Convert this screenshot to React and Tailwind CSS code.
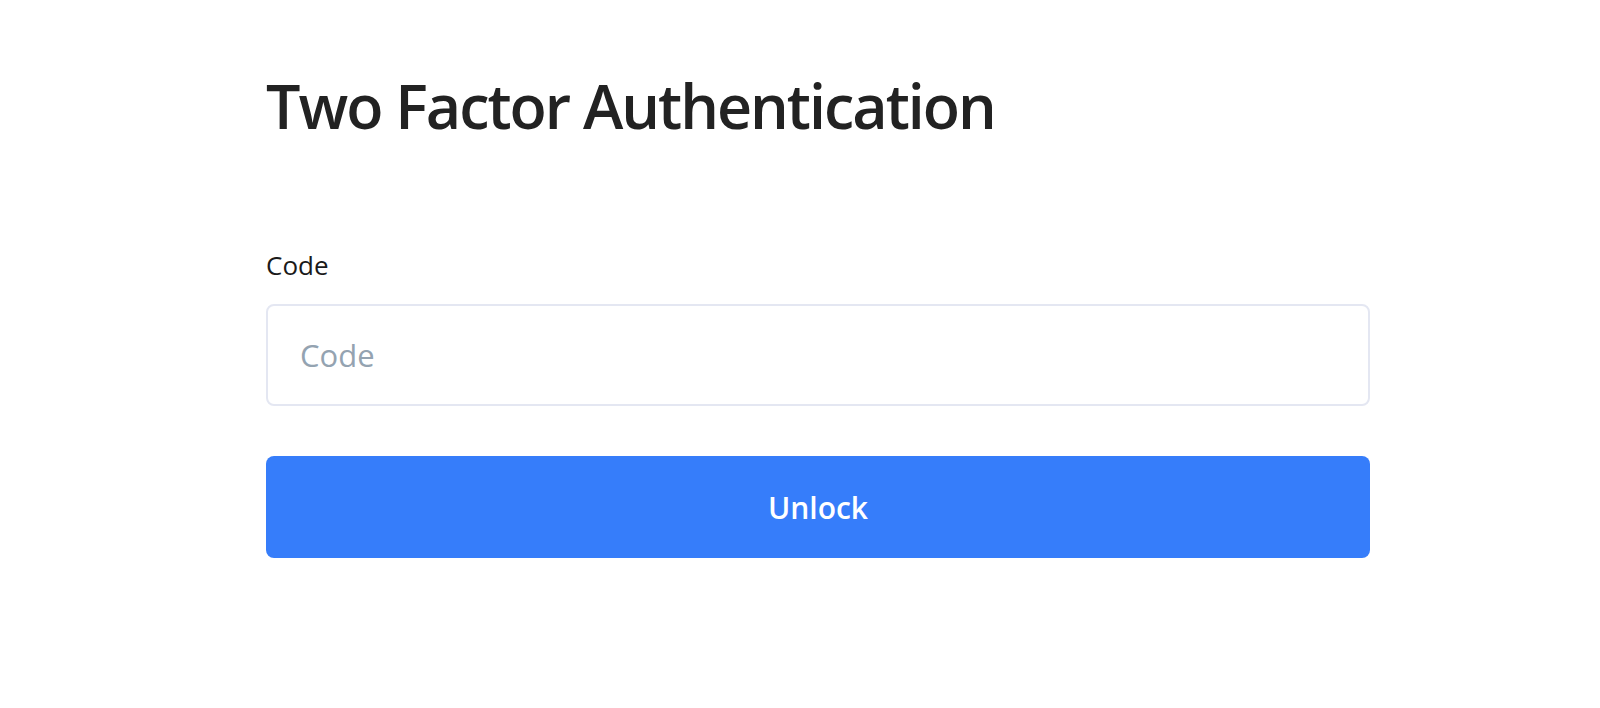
import React, { useState } from 'react';

function App() {
  const [code, setCode] = useState('');

  return (
    <div className="min-h-screen bg-white" style={{ fontFamily: '"Open Sans", "Noto Sans", sans-serif' }}>
      <div className="ml-[266px] w-[1104px] pt-[66px]">
        {/* Title */}
        <h1 className="text-[61px] leading-[80px] font-semibold text-[#222222] tracking-[-2px]">
          Two Factor Authentication
        </h1>

        {/* Form */}
        <form className="mt-[103px]" onSubmit={(e) => e.preventDefault()}>
          <label htmlFor="code" className="block text-[26px] leading-[32px] text-[#1a1a1a]">
            Code
          </label>
          <input
            id="code"
            type="text"
            value={code}
            onChange={(e) => setCode(e.target.value)}
            placeholder="Code"
            className="mt-[23px] block w-full h-[102px] px-[32px] rounded-[8px] border-2 border-[#e4e7f2] bg-white text-[31px] text-[#222222] placeholder:text-[#94a3b1] outline-none"
          />
          <button
            type="submit"
            className="mt-[50px] block w-full h-[102px] rounded-[8px] bg-[#367dfa] text-white text-[30px] font-semibold"
          >
            Unlock
          </button>
        </form>
      </div>
    </div>
  );
}

export default App;
